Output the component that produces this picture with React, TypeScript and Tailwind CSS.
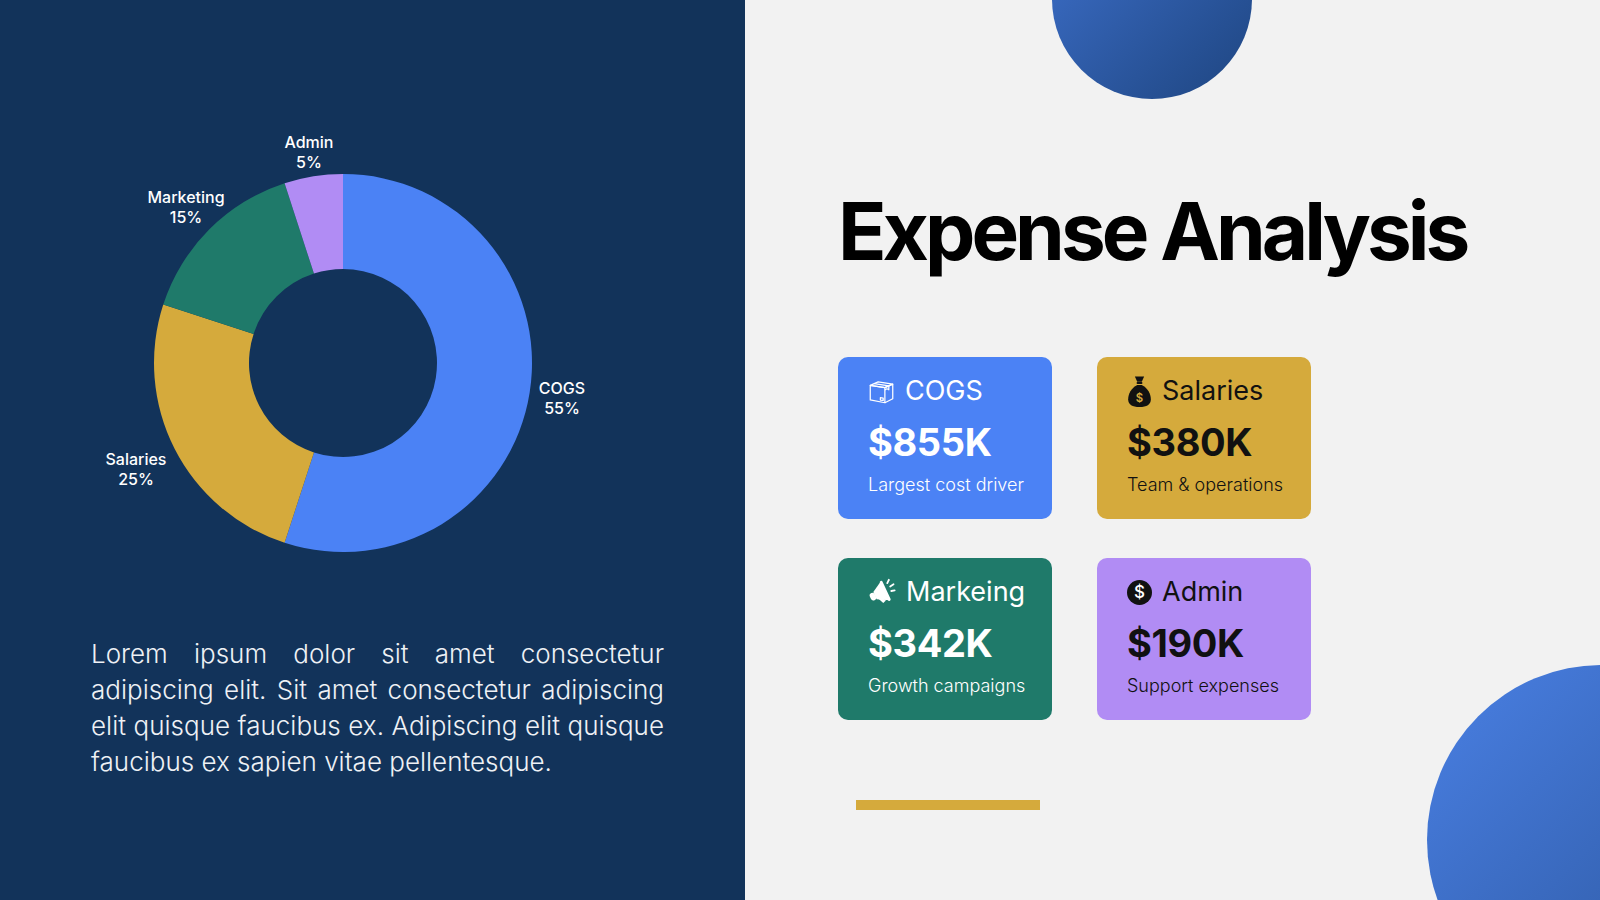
import React from "react";

const slices = [
  { label: "COGS", value: 55, color: "#4b82f5", lx: 469, ly: 285 },
  { label: "Salaries", value: 25, color: "#d5aa3c", lx: 43, ly: 356 },
  { label: "Marketing", value: 15, color: "#1f7a6a", lx: 93, ly: 94 },
  { label: "Admin", value: 5, color: "#b18cf4", lx: 216, ly: 39 },
];

// donut geometry inside a 500x500 box
const CX = 250;
const CY = 250;
const R = 189;
const r = 94;

const pt = (rad: number, deg: number) => {
  const a = (deg * Math.PI) / 180;
  return [CX + rad * Math.sin(a), CY - rad * Math.cos(a)];
};

const arc = (from: number, to: number) => {
  const large = to - from > 180 ? 1 : 0;
  const [x1, y1] = pt(R, from);
  const [x2, y2] = pt(R, to);
  const [x3, y3] = pt(r, to);
  const [x4, y4] = pt(r, from);
  return `M${x1} ${y1} A${R} ${R} 0 ${large} 1 ${x2} ${y2} L${x3} ${y3} A${r} ${r} 0 ${large} 0 ${x4} ${y4} Z`;
};

const Donut = () => {
  let start = 0;
  return (
    <div className="relative ml-[2px] h-[500px] w-[500px] shrink-0">
      <svg width="500" height="500" viewBox="0 0 500 500" className="absolute inset-0">
        {slices.map((s) => {
          const end = start + (s.value / 100) * 360;
          const d = arc(start, end);
          start = end;
          return <path key={s.label} d={d} fill={s.color} />;
        })}
      </svg>
      {slices.map((s) => (
        <div
          key={s.label}
          className="absolute -translate-x-1/2 -translate-y-1/2 text-center text-[16px] font-medium leading-[20px] text-white"
          style={{ left: s.lx, top: s.ly }}
        >
          {s.label}
          <br />
          {s.value}%
        </div>
      ))}
    </div>
  );
};

const BoxIcon = () => (
  <svg width="27" height="27" viewBox="0 0 24 24" fill="none" stroke="white" strokeWidth="1.1" strokeLinejoin="round" className="shrink-0">
    <path d="M2 6.5 L9 3.5 L22 5.5 L15 8.5 Z" />
    <path d="M2 6.5 L15 8.5 L15 22 L2 19.5 Z" />
    <path d="M15 8.5 L22 5.5 L22 18.5 L15 22" />
    <path d="M5.5 5 L18.5 7 L18.5 10.5 L16.8 9.6 L15 10.6" />
    <path d="M11 17.5 L13.5 17.9 L13.5 20 L11 19.6 Z" />
  </svg>
);

const BagIcon = () => (
  <svg width="25" height="33" viewBox="0 0 24 32" className="shrink-0">
    <path d="M7.5 1.5 H16.5 L14.2 6.5 H9.8 Z" fill="#111" />
    <rect x="9.2" y="6.8" width="5.6" height="2" rx="0.8" fill="#111" />
    <path d="M9.8 9.6 C4 12.5 1 18.5 1 23.5 C1 28.8 5 31 12 31 C19 31 23 28.8 23 23.5 C23 18.5 20 12.5 14.2 9.6 Z" fill="#111" />
    <text x="12" y="26.5" textAnchor="middle" fontSize="11" fontWeight="600" fill="#d5aa3c" fontFamily="Inter, sans-serif">$</text>
  </svg>
);

const MegaphoneIcon = () => (
  <svg width="28" height="28" viewBox="0 0 25 25" fill="white" className="shrink-0">
    <g transform="rotate(-25 11 13)">
      <rect x="1" y="10" width="5" height="7" rx="2.5" />
      <path d="M5.5 10 L15 4.5 L15 22.5 L5.5 17 Z" />
      <rect x="14.3" y="3.8" width="2.6" height="19.4" rx="1.3" />
      <path d="M7 17 L9.5 22.5 L12.5 21.5 L10.5 17.5 Z" />
    </g>
    <g stroke="white" strokeWidth="1.6" strokeLinecap="round">
      <path d="M17.2 4.6 L18.6 1.6" />
      <path d="M19.8 7.6 L22.8 5.6" />
      <path d="M20.8 11.6 L23.8 11.1" />
    </g>
  </svg>
);

const DollarIcon = () => (
  <span className="flex h-[25px] w-[25px] shrink-0 items-center justify-center rounded-full bg-[#111] text-[17px] font-medium leading-none text-white">
    $
  </span>
);

type CardProps = {
  className: string;
  icon: React.ReactNode;
  title: string;
  amount: string;
  note: string;
};

const Card = ({ className, icon, title, amount, note }: CardProps) => (
  <div className={`flex h-[162px] w-[214px] flex-col rounded-[10px] px-[30px] pt-4 ${className}`}>
    <div className="flex h-9 items-center gap-[10px]">
      {icon}
      <span className="whitespace-nowrap text-[27px] leading-9">{title}</span>
    </div>
    <div className="mt-[10px] text-[38px] font-bold leading-[46px] tracking-[-0.01em]">{amount}</div>
    <div className="mt-[6px] whitespace-nowrap text-[18px] font-light leading-7">{note}</div>
  </div>
);

export default function App() {
  return (
    <div className="flex h-[900px] w-[1600px] overflow-hidden font-['Inter',sans-serif]">
      {/* left: chart + copy */}
      <div className="flex w-[745px] shrink-0 flex-col bg-[#12335a] pl-[91px] pt-[113px]">
        <Donut />
        <p className="mt-[23px] w-[573px] text-justify text-[26px] font-light leading-[36px] text-[#eef1f5]">
          Lorem ipsum dolor sit amet consectetur adipiscing elit. Sit amet consectetur adipiscing elit quisque
          faucibus ex. Adipiscing elit quisque faucibus ex sapien vitae pellentesque.
        </p>
      </div>

      {/* right: title + cards */}
      <div className="relative flex flex-1 flex-col overflow-hidden bg-[#f2f2f2] pl-[93px] pt-[191px]">
        <div className="absolute left-[307px] top-[-101px] h-[200px] w-[200px] rounded-full bg-linear-to-br from-[#3f72cf] to-[#1e4580]" />
        <div className="absolute left-[682px] top-[665px] h-[350px] w-[350px] rounded-full bg-linear-to-br from-[#4a80e4] to-[#2a549a]" />

        <h1 className="relative text-[80px] font-bold leading-[80px] tracking-[-0.05em] text-black">
          Expense Analysis
        </h1>

        <div className="relative mt-[86px] grid grid-cols-[214px_214px] gap-x-[45px] gap-y-[39px]">
          <Card className="bg-[#4b82f5] text-white" icon={<BoxIcon />} title="COGS" amount="$855K" note="Largest cost driver" />
          <Card className="bg-[#d5aa3c] text-[#111]" icon={<BagIcon />} title="Salaries" amount="$380K" note="Team & operations" />
          <Card className="bg-[#1f7a6a] text-white" icon={<MegaphoneIcon />} title="Markeing" amount="$342K" note="Growth campaigns" />
          <Card className="bg-[#b18cf4] text-[#111]" icon={<DollarIcon />} title="Admin" amount="$190K" note="Support expenses" />
        </div>

        <div className="relative ml-[18px] mt-[80px] h-[10px] w-[184px] bg-[#d5aa3c]" />
      </div>
    </div>
  );
}
